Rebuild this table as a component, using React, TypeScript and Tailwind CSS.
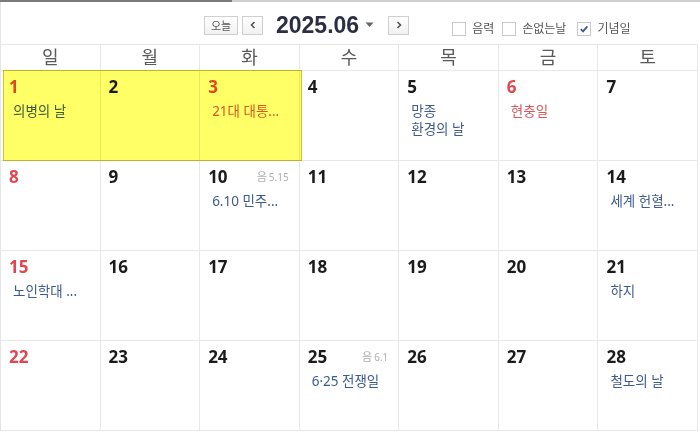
import React from 'react';

type Ev = { t: string; red?: boolean };
type Day = { d: number; red?: boolean; lunar?: string; events?: Ev[] };

const weeks: Day[][] = [
  [
    { d: 1, red: true, events: [{ t: '의병의 날' }] },
    { d: 2 },
    { d: 3, red: true, events: [{ t: '21대 대통...', red: true }] },
    { d: 4 },
    { d: 5, events: [{ t: '망종' }, { t: '환경의 날' }] },
    { d: 6, red: true, events: [{ t: '현충일', red: true }] },
    { d: 7 },
  ],
  [
    { d: 8, red: true },
    { d: 9 },
    { d: 10, lunar: '5.15', events: [{ t: '6.10 민주...' }] },
    { d: 11 },
    { d: 12 },
    { d: 13 },
    { d: 14, events: [{ t: '세계 헌혈...' }] },
  ],
  [
    { d: 15, red: true, events: [{ t: '노인학대 ...' }] },
    { d: 16 },
    { d: 17 },
    { d: 18 },
    { d: 19 },
    { d: 20 },
    { d: 21, events: [{ t: '하지' }] },
  ],
  [
    { d: 22, red: true },
    { d: 23 },
    { d: 24 },
    { d: 25, lunar: '6.1', events: [{ t: '6·25 전쟁일' }] },
    { d: 26 },
    { d: 27 },
    { d: 28, events: [{ t: '철도의 날' }] },
  ],
];

const weekdays = ['일', '월', '화', '수', '목', '금', '토'];

function Checkbox({ label, checked }: { label: string; checked?: boolean }) {
  return (
    <label className="flex items-center gap-[6px]">
      <span className="flex h-[14px] w-[14px] items-center justify-center border border-[#c9c9c9] bg-white">
        {checked && (
          <svg width="10" height="10" viewBox="0 0 10 10">
            <path d="M1.8 5.2 L4 7.4 L8.4 2.4" fill="none" stroke="#3d5b8d" strokeWidth="1.8" />
          </svg>
        )}
      </span>
      <span className="text-[12px] text-[#555]">{label}</span>
    </label>
  );
}

function Cell({ day }: { day: Day }) {
  return (
    <div className="h-[90px] border-r border-b border-[#e8e8e8] pt-1 pl-2 pr-[10px]">
      <div className="flex items-center justify-between leading-[24px]">
        <span className={`text-[17px] font-bold ${day.red ? 'text-[#e2464f]' : 'text-[#1b1b1b]'}`}>{day.d}</span>
        {day.lunar && (
          <span className="text-[11px] text-[#b0b0b0]">
            음<span className="ml-[2px] text-[10px]">{day.lunar}</span>
          </span>
        )}
      </div>
      {day.events && (
        <div className="mt-[3px] pl-1">
          {day.events.map((e) => (
            <div
              key={e.t}
              className={`whitespace-nowrap text-[13.5px] leading-[18px] ${e.red ? 'text-[#d8585a]' : 'text-[#3d5b8d]'}`}
            >
              {e.t}
            </div>
          ))}
        </div>
      )}
    </div>
  );
}

export default function App() {
  return (
    <div className="h-[432px] w-[700px] overflow-hidden bg-white font-['Noto_Sans','Noto_Sans_CJK_KR',sans-serif]">
      {/* top scroll strip */}
      <div className="flex h-[2px]">
        <div className="w-[232px] bg-[#7a7a7a]" />
        <div className="flex-1 bg-[#cfcfcf]" />
      </div>

      <div className="w-[698px] border-l border-[#e5e5e5]">
        {/* toolbar */}
        <div className="flex h-[42px] items-start pl-[203px]">
          <div className="mt-[11px] flex items-center">
            <button className="h-[19px] w-[34px] border border-[#cfcfcf] bg-gradient-to-b from-white to-[#f1f1f1] text-[11px] leading-[17px] text-[#555]">
              오늘
            </button>
            <button className="ml-1 flex h-[19px] w-[21px] items-center justify-center border border-[#cfcfcf] bg-gradient-to-b from-white to-[#f1f1f1]">
              <svg width="8" height="8" viewBox="0 0 8 8">
                <path d="M5.5 1 L2.5 4 L5.5 7" fill="none" stroke="#555" strokeWidth="1.6" />
              </svg>
            </button>
            <span className="ml-[13px] font-['Liberation_Sans',sans-serif] text-[23px] font-bold leading-[24px] text-[#2c2f44]">
              2025.06
            </span>
            <svg className="ml-[6px]" width="9" height="6" viewBox="0 0 9 6">
              <path d="M0.5 0.5 L8.5 0.5 L4.5 5 Z" fill="#666" />
            </svg>
            <button className="ml-[14px] flex h-[19px] w-[21px] items-center justify-center border border-[#cfcfcf] bg-gradient-to-b from-white to-[#f1f1f1]">
              <svg width="8" height="8" viewBox="0 0 8 8">
                <path d="M2.5 1 L5.5 4 L2.5 7" fill="none" stroke="#555" strokeWidth="1.6" />
              </svg>
            </button>
          </div>
          <div className="ml-[43px] mt-[18px] flex items-center gap-[8px]">
            <Checkbox label="음력" />
            <Checkbox label="손없는날" />
            <span className="ml-[3px]">
              <Checkbox label="기념일" checked />
            </span>
          </div>
        </div>

        {/* weekday header */}
        <div className="grid grid-cols-7 border-t border-b border-[#e8e8e8]">
          {weekdays.map((w) => (
            <div key={w} className="h-[25px] border-r border-[#e8e8e8] text-center text-[18px] leading-[25px] text-[#5a5a5a]">
              {w}
            </div>
          ))}
        </div>

        {weeks.map((week, i) => (
          <div key={i} className="relative grid grid-cols-7">
            {week.map((day) => (
              <Cell key={day.d} day={day} />
            ))}
            {i === 0 && (
              <div className="pointer-events-none absolute left-[2px] top-[-1px] h-[91px] w-[299px] border border-[#d6c12e] bg-[#ffff00]/60 mix-blend-multiply" />
            )}
          </div>
        ))}
      </div>
    </div>
  );
}
